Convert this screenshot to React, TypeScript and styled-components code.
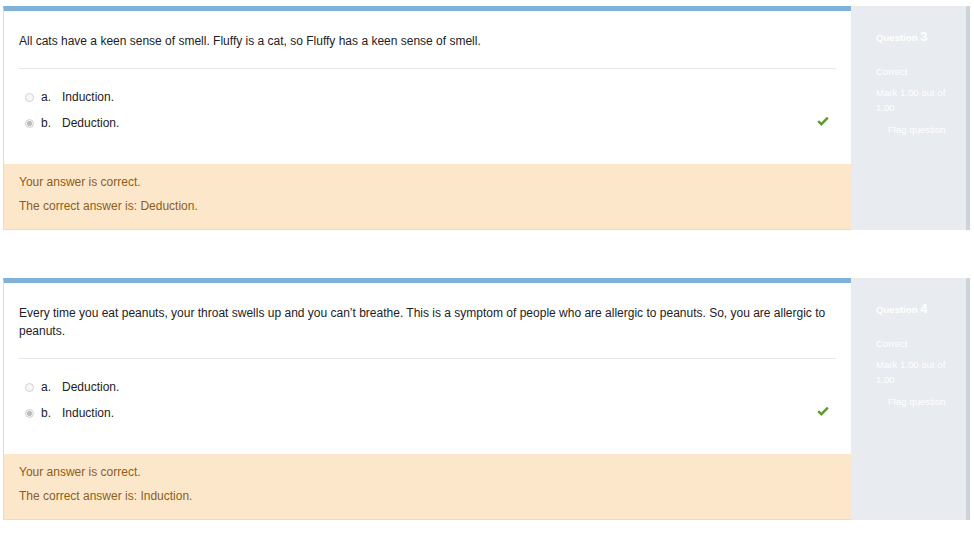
import React from "react";
import styled, { createGlobalStyle } from "styled-components";

const GlobalStyle = createGlobalStyle`
  html, body {
    margin: 0;
    padding: 0;
    background: #fff;
  }
  body {
    font-family: "Liberation Sans", Arial, sans-serif;
    font-size: 12px;
    color: #1d2125;
  }
`;

const Page = styled.div`
  display: flex;
  flex-direction: column;
  gap: 48px;
  padding: 6px 4px 0 3px;
`;

const Que = styled.div`
  display: flex;
  align-items: stretch;
`;

const Content = styled.div`
  flex: 1;
  background: #fff;
  border-top: 5px solid #7fb2da;
  border-left: 1px solid #dedede;
  border-bottom: 1px solid #dedede;
`;

const Formulation = styled.div`
  padding: 21px 15px 28px 15px;
`;

const QText = styled.p`
  margin: 0 0 18px 0;
  line-height: 18px;
  padding-right: 10px;
`;

const Divider = styled.div`
  height: 1px;
  background: #e8e8e8;
  margin: 0 0 15px -1px;
`;

const Option = styled.div`
  display: flex;
  align-items: center;
  height: 26px;
  padding-left: 6px;
  padding-right: 7px;
`;

const Radio = styled.span<{ $checked?: boolean }>`
  width: 9px;
  height: 9px;
  box-sizing: border-box;
  border-radius: 50%;
  border: 1px solid #d2d2d2;
  background: ${(p) =>
    p.$checked
      ? "radial-gradient(circle, #bdbdbd 0 2.2px, #f2f2f2 2.8px)"
      : "#f7f7f7"};
  margin-right: 7px;
`;

const Letter = styled.span`
  width: 21px;
`;

const Check = styled.svg`
  margin-left: auto;
  margin-top: -5px;
`;

const Feedback = styled.div`
  background: #fde7ca;
  color: #8b5e22;
  padding: 9px 15px 14px 15px;
  display: flex;
  flex-direction: column;
  gap: 6px;
  line-height: 18px;
`;

const Info = styled.div`
  background: #e8ebef;
  border-right: 4px solid #ced3d9;
  padding: 23px 0 0 25px;
  box-sizing: border-box;
  width: 119px;
  color: #fff;
  font-size: 9.6px;
  line-height: 15px;
`;

const QNo = styled.div`
  font-weight: bold;
  margin-bottom: 19px;
  span {
    font-size: 13px;
    font-weight: bold;
  }
`;

const State = styled.div`
  margin-bottom: 6px;
`;

const Grade = styled.div`
  width: 82px;
  margin-bottom: 7px;
`;

const Flag = styled.div`
  padding-left: 12px;
`;

type QuestionProps = {
  num: number;
  text: string;
  options: string[];
  correct: string;
};

const CheckIcon = () => (
  <Check width="12" height="10" viewBox="0 0 12 10">
    <path
      d="M1.2 5.2 L4.4 8.2 L10.8 1.6"
      fill="none"
      stroke="#5c9a34"
      strokeWidth="2.4"
    />
  </Check>
);

const Question: React.FC<QuestionProps> = ({ num, text, options, correct }) => {
  return (
    <Que>
      <Content>
        <Formulation>
          <QText>{text}</QText>
          <Divider />
          {options.map((opt, i) => (
            <Option key={opt}>
              <Radio $checked={i === 1} />
              <Letter>{i === 0 ? "a." : "b."}</Letter>
              <span>{opt}</span>
              {i === 1 && <CheckIcon />}
            </Option>
          ))}
        </Formulation>
        <Feedback>
          <div>Your answer is correct.</div>
          <div>The correct answer is: {correct}</div>
        </Feedback>
      </Content>
      <Info>
        <QNo>
          Question <span>{num}</span>
        </QNo>
        <State>Correct</State>
        <Grade>Mark 1.00 out of 1.00</Grade>
        <Flag>Flag question</Flag>
      </Info>
    </Que>
  );
};

const App: React.FC = () => {
  return (
    <>
      <GlobalStyle />
      <Page>
        <Question
          num={3}
          text="All cats have a keen sense of smell. Fluffy is a cat, so Fluffy has a keen sense of smell."
          options={["Induction.", "Deduction."]}
          correct="Deduction."
        />
        <Question
          num={4}
          text="Every time you eat peanuts, your throat swells up and you can’t breathe. This is a symptom of people who are allergic to peanuts. So, you are allergic to peanuts."
          options={["Deduction.", "Induction."]}
          correct="Induction."
        />
      </Page>
    </>
  );
};

export default App;
